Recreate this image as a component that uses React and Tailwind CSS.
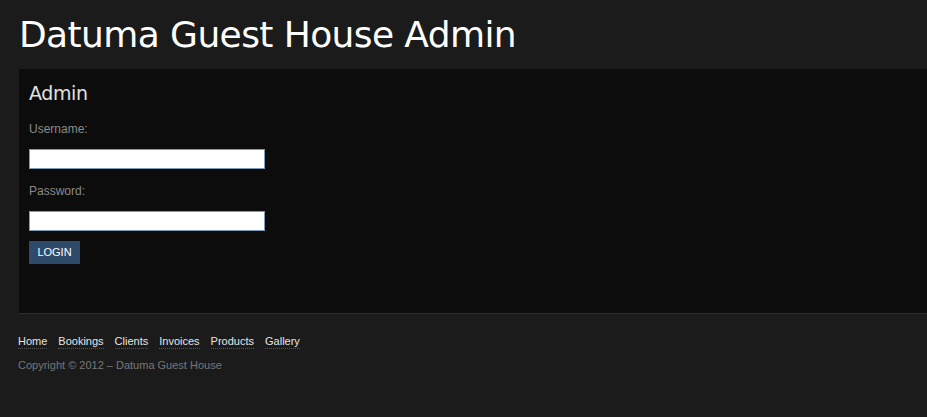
export default function App() {
  const links = ["Home", "Bookings", "Clients", "Invoices", "Products", "Gallery"];
  const small = { fontFamily: '"Liberation Sans", Arial, sans-serif' };
  return (
    <div
      className="w-[927px] h-[417px] overflow-hidden bg-[#1b1b1b]"
      style={{ fontFamily: '"DejaVu Sans", Verdana, sans-serif' }}
    >
      <h1 className="pl-[19px] pt-[13px] h-[69px] text-[36px] leading-[44px] text-white tracking-[-0.6px]">
        Datuma Guest House Admin
      </h1>
      <div className="ml-[19px] h-[245px] bg-[#0c0c0c] border-b border-[#2c2c2c] pl-[10px] pt-[12px]">
        <h2 className="text-[19px] leading-[24px] text-[#e0e0e0] tracking-[-0.4px]">Admin</h2>
        <div style={small} className="mt-[17px] text-[12px] leading-[14px] text-[#8a8a8a]">Username:</div>
        <input className="mt-[13px] block w-[236px] h-[20px] bg-white border border-[#7f9db9]" />
        <div style={small} className="mt-[15px] text-[12px] leading-[14px] text-[#8a8a8a]">Password:</div>
        <input type="password" className="mt-[13px] block w-[236px] h-[20px] bg-white border border-[#7f9db9]" />
        <button style={small} className="mt-[10px] block w-[51px] h-[23px] bg-[#2e4a6b] text-white text-[11px] leading-[23px] text-center">
          LOGIN
        </button>
      </div>
      <div style={small} className="pl-[18px] pt-[20px]">
        <div className="flex gap-[11px] text-[11px] leading-[14px] text-[#e5e5e5]">
          {links.map((l) => (
            <a key={l} className="border-b border-dotted border-[#555]">{l}</a>
          ))}
        </div>
        <div className="mt-[9px] text-[11px] leading-[14px] text-[#777]">
          Copyright © 2012 – Datuma Guest House
        </div>
      </div>
    </div>
  );
}
